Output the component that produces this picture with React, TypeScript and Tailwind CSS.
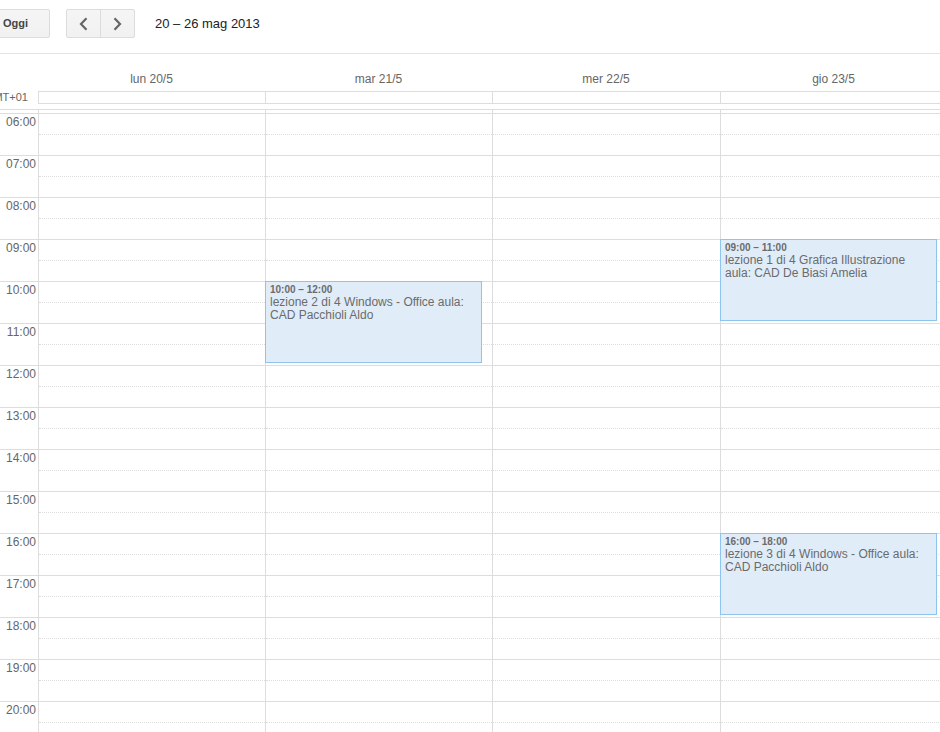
import React from "react";

const days = [
  { label: "lun 20/5", w: "w-[227px]" },
  { label: "mar 21/5", w: "w-[227px]" },
  { label: "mer 22/5", w: "w-[228px]" },
  { label: "gio 23/5", w: "w-[227px]" },
];

const hours = ["06:00", "07:00", "08:00", "09:00", "10:00", "11:00", "12:00", "13:00", "14:00", "15:00", "16:00", "17:00", "18:00", "19:00", "20:00"];

interface CalEvent {
  day: number;
  start: number;
  end: number;
  time: string;
  title: string;
}

const events: CalEvent[] = [
  { day: 1, start: 10, end: 12, time: "10:00 – 12:00", title: "lezione 2 di 4 Windows - Office aula: CAD Pacchioli Aldo" },
  { day: 3, start: 9, end: 11, time: "09:00 – 11:00", title: "lezione 1 di 4 Grafica Illustrazione aula: CAD De Biasi Amelia" },
  { day: 3, start: 16, end: 18, time: "16:00 – 18:00", title: "lezione 3 di 4 Windows - Office aula: CAD Pacchioli Aldo" },
];

const ROW = 42;

function Chevron({ dir }: { dir: "left" | "right" }) {
  return (
    <svg width="9" height="14" viewBox="0 0 9 14" fill="none">
      <path
        d={dir === "left" ? "M7.5 1.2 L2 7 L7.5 12.8" : "M1.5 1.2 L7 7 L1.5 12.8"}
        stroke="#666"
        strokeWidth="2.2"
      />
    </svg>
  );
}

export default function App() {
  return (
    <div className="w-[940px] h-[732px] overflow-hidden bg-white font-['Liberation_Sans',Arial,sans-serif] text-[#666]">
      {/* toolbar */}
      <div className="flex h-[54px] items-start border-b border-[#e5e5e5] pt-[9px] w-[1200px]">
        <button className="ml-[-19px] flex h-[29px] w-[69px] items-center justify-center rounded-[2px] border border-[#dcdcdc] bg-gradient-to-b from-[#f5f5f5] to-[#f1f1f1] text-[11px] font-bold text-[#444]">
          Oggi
        </button>
        <div className="ml-[16px] flex h-[29px] w-[69px] rounded-[2px] border border-[#dcdcdc] bg-gradient-to-b from-[#f5f5f5] to-[#f1f1f1]">
          <button className="flex w-[34px] items-center justify-center border-r border-[#dcdcdc]">
            <Chevron dir="left" />
          </button>
          <button className="flex w-[33px] items-center justify-center">
            <Chevron dir="right" />
          </button>
        </div>
        <div className="ml-[20px] flex h-[29px] items-center text-[13px] text-[#222]">20 – 26 mag 2013</div>
      </div>

      {/* day headers */}
      <div className="flex h-[37px] w-[1200px]">
        <div className="w-[38px] shrink-0" />
        {days.map((d) => (
          <div key={d.label} className={`${d.w} shrink-0 flex items-end justify-center pb-[5px] text-[12px] leading-[14px] text-[#666]`}>
            {d.label}
          </div>
        ))}
      </div>

      {/* all-day row */}
      <div className="flex h-[13px] w-[1200px]">
        <div className="flex w-[38px] shrink-0 justify-end pr-[10px] text-[11px] leading-[13px] text-[#666]">
          <span className="shrink-0 whitespace-nowrap">GMT+01</span>
        </div>
        {days.map((d) => (
          <div key={d.label} className={`${d.w} shrink-0 border-y border-l border-[#dddddd]`} />
        ))}
      </div>

      {/* time grid */}
      <div className="mt-[5px] flex w-[1200px]">
        <div className="w-[38px] shrink-0">
          <div className="h-[4px] border-t border-[#dddddd]" />
          {hours.map((h) => (
            <div key={h} className="h-[42px] border-t border-[#dddddd] pr-[2px] pt-[1px] text-right text-[12px] leading-[14px] text-[#666]">
              {h}
            </div>
          ))}
        </div>
        {days.map((d, di) => (
          <div key={d.label} className={`${d.w} relative shrink-0 border-l border-[#dddddd]`}>
            <div className="h-[4px] border-t border-[#dddddd]" />
            {hours.map((h) => (
              <div key={h} className="flex h-[42px] flex-col border-t border-[#dddddd]">
                <div className="h-[20px]" />
                <div className="flex-1 border-t border-dotted border-[#dddddd]" />
              </div>
            ))}
            {events
              .filter((e) => e.day === di)
              .map((e) => (
                <div
                  key={e.time}
                  className="absolute left-[-1px] right-[10px] overflow-hidden border border-[#8ec5ee] bg-[#e0edf9] pl-[4px] pr-[5px] pt-[2px] text-[#6b6b6b]"
                  style={{ top: 4 + (e.start - 6) * ROW, height: (e.end - e.start) * ROW - 2 }}
                >
                  <div className="text-[10px] font-bold leading-[12px]">{e.time}</div>
                  <div className="text-[12px] leading-[13px]">{e.title}</div>
                </div>
              ))}
          </div>
        ))}
      </div>
    </div>
  );
}
